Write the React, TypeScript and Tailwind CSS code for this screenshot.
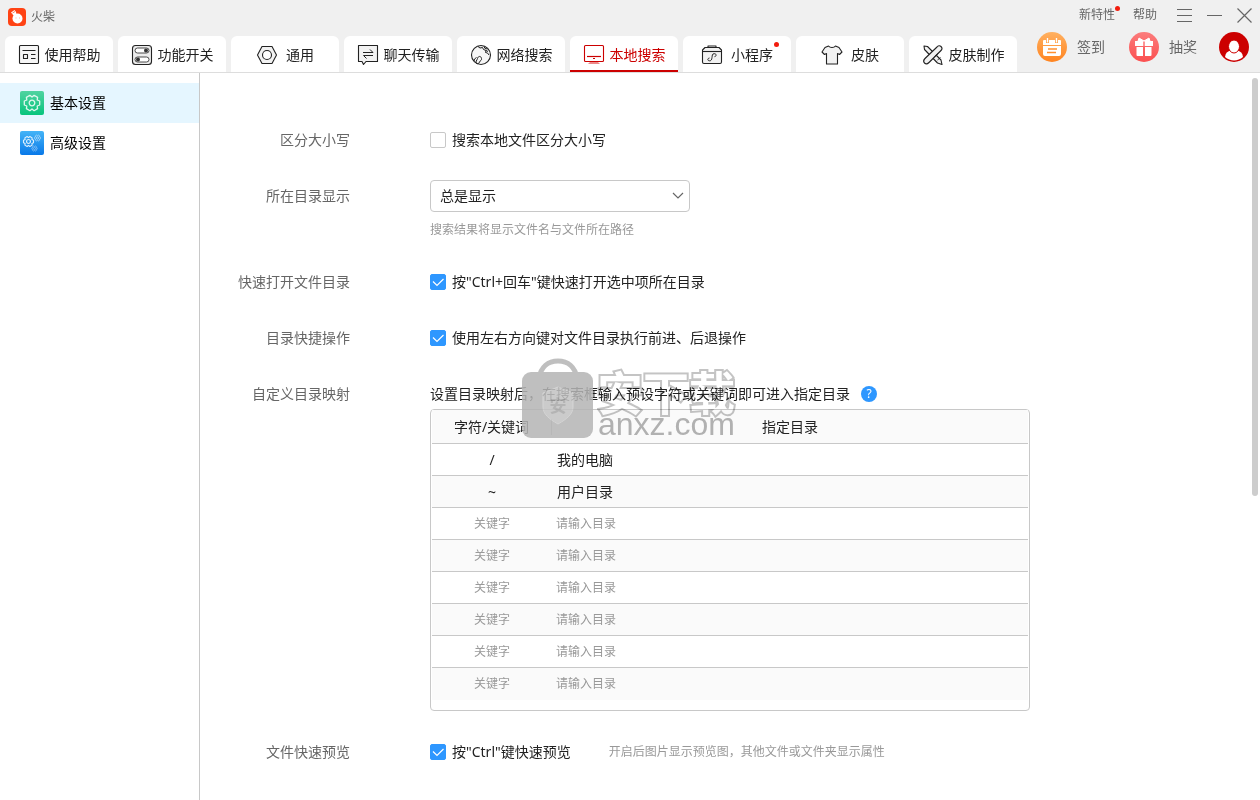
import { useState } from "react";
import type { ReactNode } from "react";

type Tab = { name: string; icon: ReactNode; dot?: boolean; wide?: boolean };

const tabs: Tab[] = [
  {
    name: "使用帮助",
    icon: (
      <>
        <rect x="1.500" y="1.500" width="19" height="18" rx="1" fill="#f6f6f6" />
        <path d="M4.500 6.500h13M13 10.500h4.500M13 14.500h4.500" />
        <rect x="5.500" y="10.500" width="4" height="4" />
      </>
    ),
  },
  {
    name: "功能开关",
    icon: (
      <>
        <rect x="1.500" y="1.500" width="19" height="19" rx="3" fill="#ececec" />
        <rect x="4" y="4" width="14" height="5" rx="2.500" fill="#fff" strokeWidth="0.800" />
        <rect x="4" y="13" width="14" height="5" rx="2.500" fill="#fff" strokeWidth="0.800" />
        <circle cx="15" cy="6.500" r="2" fill="#333" stroke="none" />
        <circle cx="7" cy="15.500" r="2" fill="#333" stroke="none" />
      </>
    ),
  },
  {
    name: "通用",
    wide: true,
    icon: (
      <>
        <path d="M6 2.500h10L20.500 11 16 19.500H6L1.500 11z" fill="#f2f2f2" />
        <circle cx="11" cy="11" r="4.500" fill="#fff" />
      </>
    ),
  },
  {
    name: "聊天传输",
    icon: (
      <>
        <path d="M1.500 1.500h19v16H9L6.500 20.500l-1.500-3H1.500z" fill="#f2f2f2" />
        <path d="M6 8.500h10L13 5.500M16 11.500H6.500l3 3" strokeWidth="1" />
      </>
    ),
  },
  {
    name: "网络搜索",
    icon: (
      <>
        <circle cx="11" cy="11" r="9.500" fill="#f6f6f6" />
        <path
          d="M8 2.500l2 1.500 2.500-.5 1 2 2.500 1-.5 2 2 .5 1.500 2M14 2.500l1 2 2.500.5M16 6.500l2 1M6.500 19.500c-1.500-2 .5-3 1-5 .5-2.500 3.500-3 4 0 .500 2-1.500 2-2 3.500-.5 1.500-1.500 2-3 1.500M6.500 13.500l-2 1.500-.5 2"
          strokeWidth="1"
        />
      </>
    ),
  },
  {
    name: "本地搜索",
    icon: (
      <>
        <rect x="1.500" y="1.500" width="19" height="16" rx="1" />
        <path d="M4 12.500h14" strokeWidth="1.200" />
        <path d="M10 14.500h2" strokeWidth="1" />
        <path d="M7 18h8l2 2H5z" fill="#ec8a8a" stroke="none" />
      </>
    ),
  },
  {
    name: "小程序",
    dot: true,
    wide: true,
    icon: (
      <>
        <path d="M7 3.500V2h8v1.500" />
        <path d="M4 3.500h14L20.500 6v12a1.500 1.500 0 0 1-1.500 1.500H3A1.500 1.500 0 0 1 1.500 18V6z" fill="#f2f2f2" />
        <path d="M1.500 7.500h19" />
        <path
          d="M13.500 12.700c3-1 1.500-3.200-.5-3-2 .2-1.700 2-2 3.800-.3 2-.5 3.300-2.500 3.300s-2.500-2.300 0-2.800"
          strokeWidth="1"
        />
      </>
    ),
  },
  {
    name: "皮肤",
    wide: true,
    icon: (
      <path
        d="M7.500 2c1.500 2 5.500 2 7 0l3.500 1.500L21 8l-2.500 2.500-2-1V20h-11V9.500l-2 1L1 8l3-4.500z"
        fill="#f2f2f2"
      />
    ),
  },
  {
    name: "皮肤制作",
    icon: (
      <>
        <path d="M2 2l3.500.5L19 16l1 4.500L15.500 19 2.500 5.500z" fill="#f2f2f2" />
        <path
          d="M15 3c1-1.500 3-1.500 4-.5s1.500 2.500 0 4L7 18.500c-1.500 1.500-3.500 1.500-4.500.5s-1-3 .5-4.500z"
          fill="#f2f2f2"
        />
        <path d="M12.500 12.500L16 9.500M15.500 16l3-2.500" strokeWidth="0.900" />
      </>
    ),
  },
];

const emptyRows = ["1", "2", "3", "4", "5", "6"];

function Logo() {
  return (
    <svg className="size-[18px]" viewBox="0 0 18 18">
      <rect width="18" height="18" rx="4" fill="#ff4314" />
      <circle cx="9.500" cy="10.500" r="5" fill="#fff" />
      <path d="M3 4.500L6.500 2l1.500 2 .5 2.500L6 8z" fill="#fff" />
      <path d="M4.500 5l2.500-1.500" stroke="#ff4314" strokeWidth="0.700" />
      <path d="M7.500 10h1M11 10h1" stroke="#ffb39e" />
    </svg>
  );
}

const gear =
  "M7.700-2V2L5.200 3l.4 2.600L2.100 7.700 0 6l-2.100 1.700-3.500-2.100L-5.200 3l-2.500-1V-2l2.500-1-.4-2.600 3.500-2.100L0-6l2.100-1.700 3.500 2.100L5.200-3z";

function GearIcon({ blue = false }: { blue?: boolean }) {
  return (
    <svg className="size-6" viewBox="0 0 24 24" fill="none" stroke="#fff" strokeLinejoin="round">
      <defs>
        <linearGradient id={blue ? "gear-blue" : "gear-green"} x1="0" y1="0" x2="0" y2="1">
          <stop offset="0" stopColor={blue ? "#45b4f7" : "#4fd3a0"} />
          <stop offset="1" stopColor={blue ? "#0878e8" : "#08c47d"} />
        </linearGradient>
      </defs>
      <rect
        width="24"
        height="24"
        rx="2"
        stroke="none"
        fill={blue ? "url(#gear-blue)" : "url(#gear-green)"}
      />
      {blue ? (
        <>
          <g transform="translate(8.500 10.500) scale(.65)" strokeWidth="1.700" opacity=".85">
            <path d={gear} />
            <circle r="3" />
          </g>
          <g transform="translate(17.500 7) scale(.38)" strokeWidth="2.200" opacity=".6">
            <path d={gear} />
            <circle r="3" />
          </g>
          <g transform="translate(14.500 17.500) scale(.34)" strokeWidth="2.200" opacity=".5">
            <path d={gear} />
            <circle r="3" />
          </g>
        </>
      ) : (
        <g transform="translate(12 12)" strokeWidth="1.300" opacity=".85">
          <path d={gear} />
          <circle r="2.800" />
        </g>
      )}
    </svg>
  );
}

function CalendarIcon() {
  return (
    <svg className="size-[30px]" viewBox="0 0 30 30">
      <defs>
        <linearGradient id="calendar" x1="0" y1="0" x2="0" y2="1">
          <stop offset="0" stopColor="#ffb060" />
          <stop offset="1" stopColor="#ff8420" />
        </linearGradient>
      </defs>
      <circle cx="15" cy="15" r="15" fill="url(#calendar)" />
      <path d="M7 8h16a1 1 0 0 1 1 1v4H6V9a1 1 0 0 1 1-1zM6 14h18v8a2 2 0 0 1-2 2H8a2 2 0 0 1-2-2z" fill="#fff" />
      <path d="M10.500 6v5M19.500 6v5" stroke="#ff9d40" strokeWidth="3" />
      <path d="M10.500 6v4.500M19.500 6v4.500" stroke="#fff" strokeWidth="1.500" />
      <path d="M11 17h9M10 20.500h9" stroke="#ff9030" strokeWidth="1.300" />
    </svg>
  );
}

function GiftIcon() {
  return (
    <svg className="size-[30px]" viewBox="0 0 30 30">
      <defs>
        <linearGradient id="gift" x1="0" y1="0" x2="0" y2="1">
          <stop offset="0" stopColor="#fb7c7c" />
          <stop offset="1" stopColor="#fb5050" />
        </linearGradient>
      </defs>
      <circle cx="15" cy="15" r="15" fill="url(#gift)" />
      <path d="M6 9h18v5H6zM7.500 15H14v9H8.500a1 1 0 0 1-1-1zM16 15h6.500v8a1 1 0 0 1-1 1H16z" fill="#fff" />
      <path d="M15 9l-5-3-1 3zM15 9l5-3 1 3z" fill="#fff" stroke="#fff" strokeLinejoin="round" />
      <path d="M15 9.500v4.500" stroke="#fb7070" strokeWidth="1.500" />
    </svg>
  );
}

function AvatarIcon() {
  return (
    <svg className="size-[30px]" viewBox="0 0 30 30">
      <circle cx="15" cy="15" r="15" fill="#c00" />
      <path d="M6 25c.5-4 2.500-6 6-6.500h6c3.500.5 5.500 2.500 6 6.500-5 4.500-13 4.500-18 0z" fill="#fff" />
      <ellipse cx="15" cy="14.500" rx="5.500" ry="6.500" fill="#fff" stroke="#c00" />
    </svg>
  );
}

function Checkbox({ label, checked = false }: { label: string; checked?: boolean }) {
  return (
    <label className="flex h-8 items-center gap-[6px]">
      <span className="relative size-4">
        <input
          type="checkbox"
          defaultChecked={checked}
          className="peer block size-4 appearance-none rounded-[2px] border border-[#c8c8c8] bg-white checked:border-[#2e97ff] checked:bg-[#2e97ff]"
        />
        <svg
          className="pointer-events-none absolute inset-0 hidden size-4 peer-checked:block"
          viewBox="0 0 16 16"
          fill="none"
          stroke="#fff"
          strokeWidth="1.200"
        >
          <path d="M3 7.500l4 4 6.500-6.500" />
        </svg>
      </span>
      {label}
    </label>
  );
}

function Row({ label, children }: { label: string; children: ReactNode }) {
  return (
    <div className="flex gap-20">
      <div className="h-8 w-[150px] shrink-0 text-right leading-8 text-[#666]">{label}</div>
      <div className="min-w-0 flex-1">{children}</div>
    </div>
  );
}

function Watermark() {
  return (
    <div className="pointer-events-none absolute -top-5 left-[92px] flex items-end gap-1">
      <svg className="h-20 w-[71px] opacity-85" viewBox="0 0 71 80">
        <path d="M17 20C19 9 26 3 36 3s17 6 19 17" fill="none" stroke="#b5b5b5" strokeWidth="5" />
        <rect y="14" width="71" height="66" rx="9" fill="#b5b5b5" />
        <path d="M36 29l15 6v14c0 7-6 12-15 17-9-5-15-10-15-17V35z" fill="#c3c3c3" stroke="#cecece" />
        <text
          x="36"
          y="54"
          textAnchor="middle"
          fontSize="17"
          fontWeight="700"
          fill="#a8a8a8"
          fontFamily="Noto Sans CJK SC, sans-serif"
        >
          安
        </text>
      </svg>
      <div className="flex flex-col mix-blend-multiply">
        <span className="text-[46px] leading-9 font-bold text-white [-webkit-text-stroke:4px_#c4c4c4] [paint-order:stroke_fill]">
          安下载
        </span>
        <span className="pl-px font-['Liberation_Sans'] text-[32px] leading-7 text-[#b5b5b5]">
          anxz.com
        </span>
      </div>
    </div>
  );
}

function MappingTable() {
  return (
    <div className="max-w-[600px] rounded border border-[#c8c8c8] px-px pb-[10px]">
      <table className="w-full table-fixed border-separate border-spacing-0">
        <thead>
          <tr className="bg-[#fafafa]">
            <th className="h-[34px] w-[120px] border-b border-[#c8c8c8] p-0 font-normal">
              <div className="border-r border-[#c8c8c8] leading-4">字符/关键词</div>
            </th>
            <th className="border-b border-[#c8c8c8] p-0 font-normal">指定目录</th>
          </tr>
        </thead>
        <tbody>
          <tr>
            <td className="h-8 border-b border-[#c8c8c8] p-0 text-center">/</td>
            <td className="border-b border-[#c8c8c8] p-0 pl-[5px]">我的电脑</td>
          </tr>
          <tr className="bg-[#fafafa]">
            <td className="h-8 border-b border-[#c8c8c8] p-0 text-center">~</td>
            <td className="border-b border-[#c8c8c8] p-0 pl-[5px]">用户目录</td>
          </tr>
          {emptyRows.map((id) => (
            <tr key={id} className="group even:bg-[#fafafa]">
              <td className="h-8 border-b border-[#c8c8c8] p-0 align-top group-last:border-b-0">
                <input
                  aria-label="关键字"
                  placeholder="关键字"
                  className="block h-[30px] w-full text-center text-xs outline-none placeholder:text-[#999]"
                />
              </td>
              <td className="border-b border-[#c8c8c8] p-0 align-top group-last:border-b-0">
                <input
                  aria-label="请输入目录"
                  placeholder="请输入目录"
                  className="block h-[30px] w-full pl-1 text-xs outline-none placeholder:text-[#999]"
                />
              </td>
            </tr>
          ))}
        </tbody>
      </table>
    </div>
  );
}

export default function App() {
  const [active, setActive] = useState("本地搜索");
  const [section, setSection] = useState("基本设置");

  return (
    <div className="flex min-h-screen flex-col bg-white font-['Noto_Sans','Noto_Sans_CJK_SC',sans-serif] text-sm text-[#222]">
      {/* Header */}
      <header className="flex justify-between border-b border-[#ddd] bg-[#f0f0f0] text-[#666]">
        <div className="pl-[5px]">
          <div className="flex h-9 items-center gap-[5px] pl-[3px] pb-[2px] text-xs">
            <Logo />
            <span>火柴</span>
          </div>
          <nav className="flex gap-[5px]">
            {tabs.map((tab) => (
              <button
                key={tab.name}
                onClick={() => setActive(tab.name)}
                className={`relative flex h-9 w-[108px] items-center justify-center rounded-t-md border-b-2 bg-white pt-[3px] ${
                  tab.wide ? "gap-2" : "gap-[5px]"
                } ${
                  active === tab.name
                    ? "border-[#c00] text-[#c00]"
                    : "border-white text-[#222]"
                }`}
              >
                <svg
                  className="size-[22px]"
                  viewBox="0 0 22 22"
                  fill="none"
                  stroke="currentColor"
                  strokeWidth="1.100"
                  strokeLinejoin="round"
                >
                  {tab.icon}
                </svg>
                <span>{tab.name}</span>
                {tab.dot && (
                  <span className="absolute top-[6px] right-3 size-[5px] rounded-full bg-[#f21c0d]" />
                )}
              </button>
            ))}
          </nav>
        </div>

        <div>
          <div className="flex h-[30px] items-center justify-end pr-2 text-xs">
            <button className="relative mr-[18px]">
              新特性
              <span className="absolute -top-px -right-[5px] size-[5px] rounded-full bg-[#f21c0d]" />
            </button>
            <button className="mr-5">帮助</button>
            <button aria-label="菜单" className="mr-[15px]">
              <svg className="size-[15px]" viewBox="0 0 15 15" stroke="#666">
                <path d="M0 1.500h15M0 7.500h15M0 13.500h15" />
              </svg>
            </button>
            <button aria-label="最小化" className="mr-[15px]">
              <svg className="size-[15px]" viewBox="0 0 15 15" stroke="#666">
                <path d="M0 7.500h15" />
              </svg>
            </button>
            <button aria-label="关闭">
              <svg className="size-[15px]" viewBox="0 0 15 15" stroke="#666" strokeWidth="1.200">
                <path d="M.5.5l14 14M14.500.5l-14 14" />
              </svg>
            </button>
          </div>
          <div className="flex h-[34px] items-center justify-end pr-[11px]">
            <button className="mr-6 flex items-center gap-[10px]">
              <CalendarIcon />
              签到
            </button>
            <button className="mr-[22px] flex items-center gap-[10px]">
              <GiftIcon />
              抽奖
            </button>
            <button aria-label="账户">
              <AvatarIcon />
            </button>
          </div>
        </div>
      </header>

      <div className="flex flex-1">
        {/* Sidebar */}
        <aside className="w-[200px] shrink-0 border-r border-[#c8c8c8] pt-[10px]">
          {["基本设置", "高级设置"].map((name) => (
            <button
              key={name}
              onClick={() => setSection(name)}
              className={`flex h-10 w-full items-center gap-[6px] pl-5 text-black ${
                section === name ? "bg-[#e5f6ff]" : ""
              }`}
            >
              <GearIcon blue={name === "高级设置"} />
              {name}
            </button>
          ))}
        </aside>

        {/* Settings */}
        <main className="flex min-w-0 flex-1 flex-col gap-6 pt-[51px]">
          <Row label="区分大小写">
            <Checkbox label="搜索本地文件区分大小写" />
          </Row>
          <Row label="所在目录显示">
            <div className="relative w-[260px]">
              <select
                aria-label="所在目录显示"
                className="block h-8 w-full appearance-none rounded border border-[#c8c8c8] bg-white pl-[9px]"
              >
                <option>总是显示</option>
              </select>
              <svg
                className="pointer-events-none absolute top-3 right-[6px] h-2 w-3"
                viewBox="0 0 12 8"
                fill="none"
                stroke="#666"
                strokeWidth="1.200"
              >
                <path d="M1 1l5 5 5-5" />
              </svg>
            </div>
            <p className="pt-[9px] pb-[3px] text-xs leading-[18px] text-[#999]">
              搜索结果将显示文件名与文件所在路径
            </p>
          </Row>
          <Row label="快速打开文件目录">
            <Checkbox checked label={'按"Ctrl+回车"键快速打开选中项所在目录'} />
          </Row>
          <Row label="目录快捷操作">
            <Checkbox checked label="使用左右方向键对文件目录执行前进、后退操作" />
          </Row>
          <Row label="自定义目录映射">
            <div className="relative pb-px">
              <div className="flex h-[31px] items-center gap-[11px]">
                <span>设置目录映射后，在搜索框输入预设字符或关键词即可进入指定目录</span>
                <button
                  aria-label="说明"
                  className="size-4 rounded-full bg-[#2e97ff] text-xs leading-4 text-white"
                >
                  ?
                </button>
              </div>
              <MappingTable />
              <Watermark />
            </div>
          </Row>
          <Row label="文件快速预览">
            <div className="flex items-center gap-[38px]">
              <Checkbox checked label={'按"Ctrl"键快速预览'} />
              <span className="text-xs text-[#999]">
                开启后图片显示预览图，其他文件或文件夹显示属性
              </span>
            </div>
          </Row>
        </main>

        {/* Scrollbar */}
        <div className="w-2 shrink-0 pt-[5px] pr-[2px]">
          <div className="h-[418px] rounded-full bg-[#cdcdcd]" />
        </div>
      </div>
    </div>
  );
}
